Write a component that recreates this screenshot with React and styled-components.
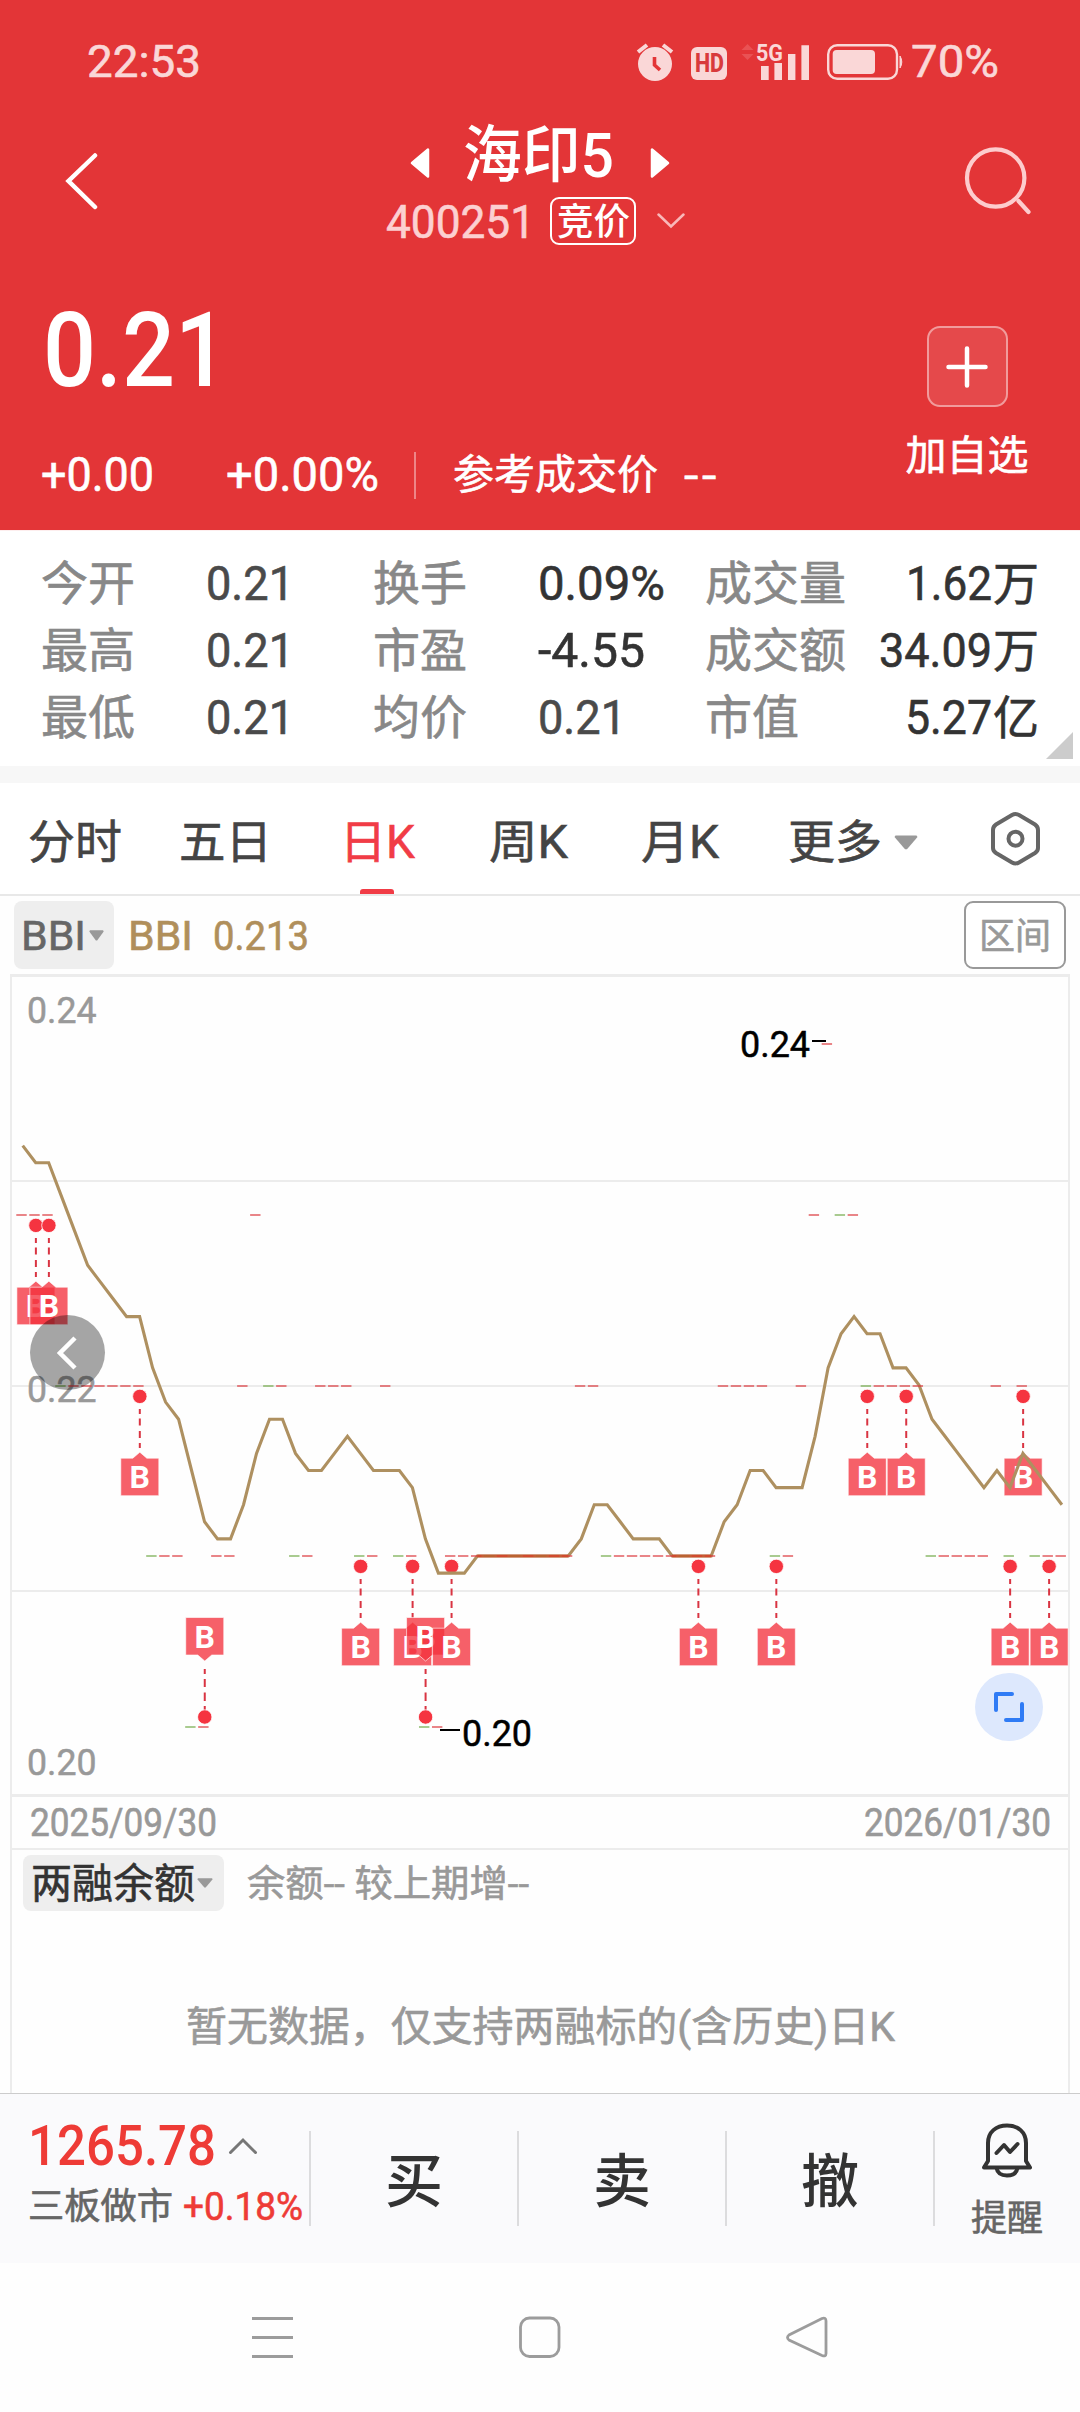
import React, { useLayoutEffect, useRef, useState } from "react";
import styled, { createGlobalStyle } from "styled-components";

const GlobalStyle = createGlobalStyle`
  * { box-sizing: border-box; }
  body {
    margin: 0;
    background: #fefefe;
    font-family: Roboto, "Noto Sans CJK SC", sans-serif;
    -webkit-font-smoothing: antialiased;
  }
  svg { display: block; flex: none; }
`;

/* Text that is condensed or expanded horizontally to fill a given width. */
const FitBox = styled.span`
  display: block;
  flex: none;
  width: ${(p) => p.$w}px;
  margin-left: ${(p) => p.$ml || 0}px;
  padding-top: ${(p) => (p.$dy || 0) * 2}px;
  font-size: ${(p) => p.$size}px;
  line-height: 1.2;
  font-weight: ${(p) => p.$weight || 400};
  -webkit-text-stroke: ${(p) => (p.$weight ? 0 : 0.6)}px currentColor;
  letter-spacing: ${(p) => p.$ls || 0}px;
  color: ${(p) => p.$color || "inherit"};
  white-space: pre;
`;
const FitInner = styled.span`
  display: inline-block;
  transform-origin: 0 50%;
`;

function Fit({ w, size, weight, color, ml, dy, ls, children }) {
  const ref = useRef(null);
  const [scale, setScale] = useState(1);
  useLayoutEffect(() => {
    const natural = ref.current.getBoundingClientRect().width / scale;
    if (natural) setScale(w / natural);
  }, [w, size, weight, children]);
  return (
    <FitBox $w={w} $size={size} $weight={weight} $color={color} $ml={ml} $dy={dy} $ls={ls}>
      <FitInner ref={ref} style={{ transform: `scaleX(${scale})` }}>
        {children}
      </FitInner>
    </FitBox>
  );
}

const Screen = styled.main`
  width: 1080px;
  height: 2412px;
  display: flex;
  flex-direction: column;
  overflow: hidden;
`;

/* ---------- red header ---------- */
const Header = styled.header`
  height: 530px;
  flex: none;
  background: #e33537;
  color: #fff;
`;
const StatusBar = styled.div`
  height: 120px;
  padding: 4px 81px 0 87px;
  display: flex;
  align-items: center;
  color: #fad7d7;
`;
const StatusIcons = styled.div`
  margin-left: auto;
  display: flex;
  align-items: center;
`;
const HdBadge = styled.div`
  width: 36px;
  height: 33px;
  margin: 3px 14px 0 17px;
  border-radius: 6px;
  background: #fad7d7;
  display: flex;
  align-items: center;
  justify-content: center;
`;
const TitleBar = styled.div`
  height: 140px;
  padding: 0 48px 0 64px;
  display: flex;
  justify-content: space-between;
`;
const BackIcon = styled.svg`
  margin-top: 31px;
`;
const SearchIcon = styled.svg`
  margin-top: 25px;
`;
const TitleBlock = styled.div`
  width: 320px;
  margin-left: 20px;
  display: flex;
  flex-direction: column;
`;
const TitleRow = styled.div`
  height: 70px;
  padding: 0 30px;
  display: flex;
  align-items: center;
  justify-content: space-between;
`;
const StepIcon = styled.svg`
  margin-top: 15px;
`;
const CodeRow = styled.div`
  height: 47px;
  margin-top: 7px;
  padding-left: 6px;
  display: flex;
  align-items: center;
  color: #fcd0d1;
`;
const MarketTag = styled.div`
  width: 86px;
  height: 48px;
  margin: 0 21px 0 15px;
  border: 2px solid #fff;
  border-radius: 9px;
  color: #fff;
  display: flex;
  align-items: center;
  justify-content: center;
`;
const QuoteArea = styled.div`
  height: 270px;
  padding: 0 27px 0 41px;
  display: flex;
  justify-content: space-between;
`;
const QuoteMain = styled.div`
  display: flex;
  flex-direction: column;
`;
const PriceRow = styled.div`
  height: 180px;
  display: flex;
  align-items: center;
`;
const ChangeRow = styled.div`
  height: 70px;
  display: flex;
  align-items: center;
`;
const ChangeDivider = styled.i`
  width: 2px;
  height: 47px;
  margin: 0 37px 0 35px;
  background: rgba(255, 255, 255, 0.4);
`;
const AddColumn = styled.div`
  width: 172px;
  padding-top: 66px;
  display: flex;
  flex-direction: column;
  align-items: center;
`;
const AddButton = styled.div`
  width: 81px;
  height: 81px;
  margin-bottom: 25px;
  border: 2px solid rgba(255, 255, 255, 0.45);
  border-radius: 13px;
  background: rgba(255, 255, 255, 0.1);
  display: flex;
  align-items: center;
  justify-content: center;
`;

/* ---------- statistics ---------- */
const Stats = styled.section`
  height: 236px;
  flex: none;
  padding: 19px 7px 7px 41px;
  border-top: 1px solid #fdeeee;
  background: #fff;
  display: flex;
`;
const StatGrid = styled.div`
  width: 998px;
  display: grid;
  grid-template-columns: 332px 332px 334px;
  grid-template-rows: repeat(3, 67px);
`;
const StatCell = styled.div`
  display: flex;
  align-items: center;
  justify-content: ${(p) => (p.$end ? "space-between" : "flex-start")};
`;
const StatLabel = styled.div`
  width: ${(p) => (p.$end ? "auto" : "165px")};
`;
const StatValue = styled.div`
  display: flex;
  align-items: center;
  gap: 1px;
`;
const CornerIcon = styled.svg`
  margin: auto 0 0 auto;
`;
const Band = styled.div`
  height: 17px;
  flex: none;
  background: #f7f7f7;
`;

/* ---------- tabs ---------- */
const Tabs = styled.nav`
  height: 113px;
  flex: none;
  padding-left: 28px;
  border-bottom: 2px solid #e8e8e8;
  background: #fff;
  display: flex;
`;
const Tab = styled.div`
  width: ${(p) => p.$w}px;
  display: flex;
  align-items: center;
  gap: 12px;
  padding-top: 8px;
  color: #444;
`;
const ActiveTab = styled.div`
  width: 149px;
  height: 111px;
  display: flex;
  flex-direction: column;
  justify-content: space-between;
  color: #f13c46;
`;
const ActiveLabel = styled.div`
  height: 106px;
  padding-top: 13px;
  display: flex;
  align-items: center;
`;
const Underline = styled.i`
  width: 34px;
  height: 5px;
  margin-left: 20px;
  border-radius: 3px 3px 0 0;
  background: #f13c46;
`;
const SettingsIcon = styled.svg`
  margin-top: 27px;
`;

/* ---------- indicator row ---------- */
const IndicatorRow = styled.div`
  height: 78px;
  flex: none;
  padding: 5px 14px 0;
  display: flex;
`;
const Pill = styled.div`
  width: ${(p) => p.$w}px;
  height: ${(p) => p.$h}px;
  padding-left: ${(p) => p.$pl}px;
  border-radius: 8px;
  background: #eee;
  display: flex;
  align-items: center;
  gap: ${(p) => p.$gap}px;
`;
const IndicatorValues = styled.div`
  height: 68px;
  margin-left: 14px;
  display: flex;
  align-items: center;
  gap: 20px;
  color: #b08f5b;
`;
const RangeButton = styled.div`
  width: 102px;
  height: 68px;
  margin-left: auto;
  border: 2px solid #999;
  border-radius: 9px;
  background: #fff;
  display: flex;
  align-items: center;
  justify-content: center;
`;

/* ---------- chart ---------- */
const ChartWrap = styled.section`
  position: relative;
  height: 823px;
  margin: 0 10px;
  flex: none;
`;
const PrevButton = styled.div`
  position: absolute;
  left: 20px;
  top: 341px;
  width: 75px;
  height: 75px;
  padding-right: 2px;
  border-radius: 50%;
  background: rgba(0, 0, 0, 0.35);
  display: flex;
  align-items: center;
  justify-content: center;
`;
const ExpandButton = styled.div`
  position: absolute;
  left: 965px;
  top: 699px;
  width: 68px;
  height: 68px;
  border-radius: 50%;
  background: #dde8fd;
  display: flex;
  align-items: center;
  justify-content: center;
`;
const DateRow = styled.div`
  height: 53px;
  flex: none;
  margin: 0 10px;
  padding: 0 17px 0 18px;
  border: 2px solid #ececec;
  border-top: 0;
  display: flex;
  align-items: center;
  justify-content: space-between;
  color: #999;
`;
const MarginPanel = styled.section`
  height: 243px;
  flex: none;
  margin: 0 10px;
  padding: 5px 11px;
  border: solid #ececec;
  border-width: 0 2px;
`;
const MarginHead = styled.div`
  display: flex;
  align-items: center;
`;
const EmptyNote = styled.div`
  display: flex;
  justify-content: center;
  margin-top: 92px;
`;

/* ---------- trade bar ---------- */
const TradeBar = styled.footer`
  height: 170px;
  flex: none;
  padding-top: 37px;
  border-top: 1px solid #ccc;
  background: #fafafc;
  display: flex;
`;
const IndexCell = styled.div`
  width: 309px;
  margin-top: -14px;
  padding-left: 28px;
`;
const IndexTop = styled.div`
  height: 58px;
  display: flex;
  align-items: center;
  gap: 12px;
`;
const IndexBottom = styled.div`
  height: 62px;
  display: flex;
  align-items: center;
  gap: 10px;
`;
const TradeCell = styled.div`
  width: 208px;
  height: 95px;
  border-left: 2px solid #dcdcde;
  display: flex;
  align-items: center;
  justify-content: center;
`;
const AlertCell = styled.div`
  width: 146px;
  height: 95px;
  border-left: 2px solid #dcdcde;
  display: flex;
  flex-direction: column;
  align-items: center;
`;
const BellIcon = styled.svg`
  margin-top: -9px;
  margin-bottom: 20px;
`;
const SystemNav = styled.div`
  height: 148px;
  flex: none;
  padding: 53px 252px 0 251px;
  background: #fefefe;
  display: flex;
  justify-content: space-between;
`;

const Down = ({ w, h }) => (
  <svg width={w} height={h} viewBox="0 0 24 15" preserveAspectRatio="none">
    <path d="M1.5 0.5H22.5L23.5 2L13 14.3H11L0.5 2Z" fill="#999" />
  </svg>
);

/* ---------- chart data ---------- */
const X0 = 22.7;
const DX = 12.99;
const px = (i) => X0 + DX * i;
const bbiY = (k) => 1556 - 17.1 * k;
/* thousandths above 0.210 for each trading day */
const BBI = [
  24, 23, 23, 21, 19, 17, 16, 15, 14, 14, 11, 9, 8, 5, 2, 1, 1, 3, 6, 8, 8, 6,
  5, 5, 6, 7, 6, 5, 5, 5, 4, 1, -1, -1, -1, 0, 0, 0, 0, 0, 0, 0, 0, 1, 3, 3, 2,
  1, 1, 1, 0, 0, 0, 0, 2, 3, 5, 5, 4, 4, 4, 7, 11, 13, 14, 13, 13, 11, 11, 10,
  8, 7, 6, 5, 4, 5, 4, 6, 5, 4, 3,
];
const DASHES = [
  { y: 1044, red: [62], green: [] },
  { y: 1215, red: [0, 1, 2, 18, 61, 64], green: [63] },
  {
    y: 1386,
    red: [4, 5, 6, 7, 8, 9, 17, 20, 23, 24, 25, 28, 43, 44, 54, 55, 56, 57, 60, 66, 67, 68, 69, 75, 77],
    green: [3, 19, 65],
  },
  {
    y: 1556,
    red: [11, 12, 15, 16, 22, 27, 30, 33, 34, 35, 37, 39, 41, 42, 46, 47, 48, 49, 50, 52, 53, 59, 71, 72, 73, 74, 79, 80],
    green: [10, 21, 26, 29, 36, 38, 40, 45, 51, 58, 70, 76, 78],
  },
  { y: 1727, red: [14, 32], green: [13, 31] },
];
const BUYS = [
  { i: 1, y: 1215 }, { i: 2, y: 1215 }, { i: 9, y: 1386 },
  { i: 14, y: 1727, below: true }, { i: 26, y: 1556 }, { i: 30, y: 1556 },
  { i: 31, y: 1727, below: true }, { i: 33, y: 1556 }, { i: 52, y: 1556 },
  { i: 58, y: 1556 }, { i: 65, y: 1386 }, { i: 68, y: 1386 },
  { i: 76, y: 1556 }, { i: 77, y: 1386 }, { i: 79, y: 1556 },
];

function Buy({ i, y, below }) {
  const x = px(i) + 0.2;
  const top = below ? y - 109.5 : y + 72.2;
  const tip = below
    ? `L${x + 7} ${top + 37.5}L${x} ${top + 43.5}L${x - 7} ${top + 37.5}`
    : "";
  const roof = below ? "" : `L${x - 7} ${top}L${x} ${top - 6}L${x + 7} ${top}`;
  const segs = below
    ? [[-58, -53], [-48, -40], [-34.5, -26], [-21, -16]]
    : [[23, 28], [32.5, 39.5], [45, 52], [57, 62]];
  return (
    <g>
      {segs.map(([a, b]) => (
        <path key={a} d={`M${x} ${y + a}V${y + b}`} stroke="#d93442" strokeWidth="2" />
      ))}
      <circle cx={x} cy={below ? y - 10 : y + 10.4} r="7.2" fill="#f53440" stroke="#fff" strokeWidth="0.8" />
      <path
        d={`M${x - 19} ${top}${roof}L${x + 19} ${top}V${top + 37.5}${tip}H${x - 19}Z`}
        fill="#f3303c"
        fillOpacity="0.77"
        stroke="#fff"
        strokeOpacity="0.6"
        strokeWidth="1"
        strokeLinejoin="round"
      />
      <text x={x} y={top + 30} textAnchor="middle" fontSize="32" fontWeight="700" fill="#fff">
        B
      </text>
    </g>
  );
}

const Dash = ({ i, y, green }) => (
  <rect x={px(i) - 6.4} y={y - 1} width="10.4" height="2" fill={green ? "#74ab4c" : "#dc3a3f"} fillOpacity="0.62" />
);

const AxisText = ({ x, y, w, fill = "#999", children }) => (
  <text x={x} y={y} fontSize="37" fill={fill} stroke={fill} strokeWidth="0.5" textLength={w} lengthAdjust="spacingAndGlyphs">
    {children}
  </text>
);

function Chart() {
  return (
    <ChartWrap>
      <svg width="1060" height="823" viewBox="10 974 1060 823">
        <path d="M11 974V1797M1069 974V1797" stroke="#ececec" strokeWidth="2" />
        <path d="M10 975.5H1070M10 1795.5H1070" stroke="#ececec" strokeWidth="3" />
        <path d="M12 1181H1068M12 1386H1068M12 1591H1068" stroke="#ececec" strokeWidth="2" />
        <AxisText x={27} y={1023} w={69.5}>0.24</AxisText>
        <AxisText x={27} y={1402} w={69.5}>0.22</AxisText>
        <AxisText x={27} y={1775} w={69.5}>0.20</AxisText>
        {BUYS.map((b) => (
          <Buy key={b.i} {...b} />
        ))}
        <polyline
          points={BBI.map((k, i) => `${px(i)},${bbiY(k)}`).join(" ")}
          fill="none"
          stroke="#ae9060"
          strokeWidth="3.1"
        />
        {DASHES.map((d) => (
          <g key={d.y}>
            {d.red.map((i) => <Dash key={i} i={i} y={d.y} />)}
            {d.green.map((i) => <Dash key={i} i={i} y={d.y} green />)}
          </g>
        ))}
        <path d={`M${px(35)} 1556H${px(42)}M${px(50)} 1556H${px(53)}`} stroke="#d2421f" strokeOpacity="0.65" strokeWidth="3" />
        <path d="M812 1041H826M440 1730H460" stroke="#000" strokeWidth="2" />
        <AxisText x={740} y={1057} w={70} fill="#000">0.24</AxisText>
        <AxisText x={462} y={1746} w={70} fill="#000">0.20</AxisText>
      </svg>
      <PrevButton>
        <svg width="20" height="34" viewBox="0 0 20 34">
          <path d="M18 2L3 17L18 32" fill="none" stroke="#fff" strokeWidth="4.5" />
        </svg>
      </PrevButton>
      <ExpandButton>
        <svg width="32" height="32" viewBox="0 0 32 32">
          <path d="M3 19V3H19M29 13V29H13" fill="none" stroke="#2f7bf5" strokeWidth="4" strokeLinecap="round" strokeLinejoin="round" />
        </svg>
      </ExpandButton>
    </ChartWrap>
  );
}

const STATS = [
  { label: "今开", lw: 94, v: "0.21", w: 88, c: "#4a4a4a" },
  { label: "换手", lw: 94, v: "0.09%", w: 127, c: "#333" },
  { label: "成交量", lw: 141, v: "1.62", w: 86, unit: "万" },
  { label: "最高", lw: 94, v: "0.21", w: 88, c: "#4a4a4a" },
  { label: "市盈", lw: 94, v: "-4.55", w: 107, c: "#333" },
  { label: "成交额", lw: 141, v: "34.09", w: 113, unit: "万" },
  { label: "最低", lw: 94, v: "0.21", w: 88, c: "#4a4a4a" },
  { label: "均价", lw: 94, v: "0.21", w: 88, c: "#4a4a4a" },
  { label: "市值", lw: 94, v: "5.27", w: 87, unit: "亿" },
];

export default function App() {
  return (
    <>
      <GlobalStyle />
      <Screen>
        <Header>
          <StatusBar>
            <Fit w={114} size={44} dy={0.5}>22:53</Fit>
            <StatusIcons>
              <svg width="38" height="40" viewBox="0 0 38 40">
                <circle cx="19" cy="22" r="17" fill="#fad7d7" />
                <path d="M2 10L11 3M36 10L27 3" stroke="#fad7d7" strokeWidth="4" />
                <path d="M18.5 15V23L24 28" fill="none" stroke="#e33537" strokeWidth="3.6" />
              </svg>
              <HdBadge>
                <Fit w={29} size={25} weight={800} color="#d83a3c">HD</Fit>
              </HdBadge>
              <svg width="70" height="56" viewBox="741 33 70 56">
                <path d="M741.5 49L747.5 43L753.5 49ZM741.5 53H753.5L747.5 59Z" fill="#e95254" />
                <text x="756" y="59.5" fontSize="24" fontWeight="700" fill="#fad7d7" textLength="27" lengthAdjust="spacingAndGlyphs">5G</text>
                <path d="M761 65H768.7V79H761ZM774.4 62H782V79H774.4ZM788 53H795.4V79H788ZM801.4 44.3H809V79H801.4Z" fill="#fad7d7" />
              </svg>
              <svg width="100" height="40" viewBox="811 42 100 40">
                <rect x="828.2" y="45.2" width="68.8" height="33.6" rx="9" fill="none" stroke="#fad7d7" strokeWidth="2.4" />
                <rect x="832.7" y="50" width="42.3" height="24" rx="4" fill="#fad7d7" />
                <path d="M900 56Q903.6 62 900 68Z" fill="#fad7d7" stroke="#fad7d7" />
              </svg>
              <Fit w={88} size={44} dy={0.5}>70%</Fit>
            </StatusIcons>
          </StatusBar>
          <TitleBar>
            <BackIcon width="34" height="60" viewBox="0 0 34 60">
              <path d="M31 4.500L4.500 30L31 56" fill="none" stroke="#fff" strokeWidth="4.500" strokeLinecap="round" />
            </BackIcon>
            <TitleBlock>
              <TitleRow>
                <StepIcon width="20" height="30" viewBox="0 0 20 30">
                  <path d="M18 1.500V28.500L2 15Z" fill="#fff" stroke="#fff" strokeWidth="2.500" strokeLinejoin="round" />
                </StepIcon>
                <Fit w={151} size={62} weight={500} dy={1.5} ml={-3}>海印5</Fit>
                <StepIcon width="20" height="30" viewBox="0 0 20 30">
                  <path d="M2 1.500V28.500L18 15Z" fill="#fff" stroke="#fff" strokeWidth="2.500" strokeLinejoin="round" />
                </StepIcon>
              </TitleRow>
              <CodeRow>
                <Fit w={149} size={46} dy={2}>400251</Fit>
                <MarketTag>
                  <Fit w={73} size={37} weight={500} dy={3}>竞价</Fit>
                </MarketTag>
                <svg width="28" height="16" viewBox="0 0 28 16">
                  <path d="M1.500 1.500L14 13.500L26.500 1.500" fill="none" stroke="#f9b8b9" strokeWidth="2.500" strokeLinecap="round" />
                </svg>
              </CodeRow>
            </TitleBlock>
            <SearchIcon width="70" height="70" viewBox="962 145 70 70">
              <circle cx="995.700" cy="178" r="28.700" fill="none" stroke="#fdcccd" strokeWidth="4.200" />
              <path d="M1018.500 201L1028.500 212" stroke="#fdcccd" strokeWidth="4.200" strokeLinecap="round" />
            </SearchIcon>
          </TitleBar>
          <QuoteArea>
            <QuoteMain>
              <PriceRow>
                <Fit w={185} size={104} weight={500} ml={1.5} dy={1}>0.21</Fit>
              </PriceRow>
              <ChangeRow>
                <Fit w={113} size={48}>+0.00</Fit>
                <Fit w={153} size={48} ml={72}>+0.00%</Fit>
                <ChangeDivider />
                <Fit w={205} size={41} dy={1}>参考成交价</Fit>
                <Fit w={36} size={42} ml={26} ls={3} dy={1}>--</Fit>
              </ChangeRow>
            </QuoteMain>
            <AddColumn>
              <AddButton>
                <svg width="42" height="42" viewBox="0 0 42 42">
                  <path d="M21 2.500V39.500M2.500 21H39.500" stroke="#fff" strokeWidth="4.500" strokeLinecap="round" />
                </svg>
              </AddButton>
              <Fit w={123} size={41}>加自选</Fit>
            </AddColumn>
          </QuoteArea>
        </Header>

        <Stats>
          <StatGrid>
            {STATS.map((s) => (
              <StatCell key={s.label} $end={!!s.unit}>
                <StatLabel $end={!!s.unit}>
                  <Fit w={s.lw} size={47} color="#888" dy={0.5}>{s.label}</Fit>
                </StatLabel>
                <StatValue>
                  <Fit w={s.w} size={48} color={s.c || "#333"}>{s.v}</Fit>
                  {s.unit && <Fit w={46} size={46} color="#333" dy={1}>{s.unit}</Fit>}
                </StatValue>
              </StatCell>
            ))}
          </StatGrid>
          <CornerIcon width="27" height="27" viewBox="0 0 27 27">
            <path d="M27 0V27H0Z" fill="#ccc" />
          </CornerIcon>
        </Stats>
        <Band />

        <Tabs>
          <Tab $w={151}><Fit w={94} size={46} dy={0.5}>分时</Fit></Tab>
          <Tab $w={161}><Fit w={93} size={46} dy={0.5}>五日</Fit></Tab>
          <ActiveTab>
            <ActiveLabel><Fit w={75} size={46} dy={0.5}>日K</Fit></ActiveLabel>
            <Underline />
          </ActiveTab>
          <Tab $w={152}><Fit w={79} size={46} dy={0.5}>周K</Fit></Tab>
          <Tab $w={147}><Fit w={78} size={46} dy={0.5}>月K</Fit></Tab>
          <Tab $w={200}>
            <Fit w={94} size={46} dy={0.5}>更多</Fit>
            <Down w={24} h={15} />
          </Tab>
          <SettingsIcon width="54" height="58" viewBox="989 810 54 58">
            <path d="M1013 815Q1016.500 813 1020 815L1036 824.500Q1039 826.500 1039 830V848Q1039 851 1036 853L1020 862.500Q1016.500 864.500 1013 862.500L997 853Q994 851 994 848V830Q994 826.500 997 824.500Z" fill="none" stroke="#666" strokeWidth="4" />
            <circle cx="1016.500" cy="838.700" r="7" fill="none" stroke="#666" strokeWidth="4" />
          </SettingsIcon>
        </Tabs>

        <IndicatorRow>
          <Pill $w={100} $h={68} $gap={3} $pl={7}>
            <Fit w={65} size={41} color="#666" dy={1.5}>BBI</Fit>
            <Down w={15} h={11} />
          </Pill>
          <IndicatorValues>
            <Fit w={65} size={41} dy={1.5}>BBI</Fit>
            <Fit w={96} size={41} dy={1.5}>0.213</Fit>
          </IndicatorValues>
          <RangeButton>
            <Fit w={72} size={36} color="#999" dy={2.5}>区间</Fit>
          </RangeButton>
        </IndicatorRow>

        <Chart />
        <DateRow>
          <Fit w={187} size={38} dy={1}>2025/09/30</Fit>
          <Fit w={187} size={38} dy={1}>2026/01/30</Fit>
        </DateRow>
        <MarginPanel>
          <MarginHead>
            <Pill $w={201} $h={56} $gap={2} $pl={8}>
              <Fit w={164} size={41} color="#333" dy={1.5}>两融余额</Fit>
              <Down w={16} h={10} />
            </Pill>
            <Fit w={282} size={37} color="#999" ml={23} dy={2.5}>余额-- 较上期增--</Fit>
          </MarginHead>
          <EmptyNote>
            <Fit w={709} size={41} color="#999">暂无数据，仅支持两融标的(含历史)日K</Fit>
          </EmptyNote>
        </MarginPanel>

        <TradeBar>
          <IndexCell>
            <IndexTop>
              <Fit w={188} size={55} weight={500} color="#ee3b36">1265.78</Fit>
              <svg width="30" height="18" viewBox="0 0 30 18">
                <path d="M2.500 15.500L15 3L27.500 15.500" fill="none" stroke="#777" strokeWidth="3" strokeLinecap="round" />
              </svg>
            </IndexTop>
            <IndexBottom>
              <Fit w={145} size={36} color="#666" dy={2}>三板做市</Fit>
              <Fit w={120} size={38} color="#ee3b36" dy={1.5}>+0.18%</Fit>
            </IndexBottom>
          </IndexCell>
          {["买", "卖", "撤"].map((t) => (
            <TradeCell key={t}>
              <Fit w={58} size={58} weight={500} color="#333" dy={4.5}>{t}</Fit>
            </TradeCell>
          ))}
          <AlertCell>
            <BellIcon width="54" height="56" viewBox="0 0 54 56">
              <path d="M8 39V21C8 10 16 3.500 27 3.500S46 10 46 21V39L50 45.500H4Z" fill="none" stroke="#333" strokeWidth="4" strokeLinejoin="round" />
              <path d="M16.500 46C17.500 51.500 22 53.500 27 53.500S36.500 51.500 37.500 46" fill="none" stroke="#333" strokeWidth="4" />
              <path d="M16.500 31L24 23L30 30L37.500 22" fill="none" stroke="#333" strokeWidth="4" strokeLinecap="round" strokeLinejoin="round" />
            </BellIcon>
            <Fit w={72} size={36} color="#666">提醒</Fit>
          </AlertCell>
        </TradeBar>

        <SystemNav>
          <svg width="43" height="43" viewBox="0 0 43 43">
            <path d="M1 2.500H42M1 21.500H42M1 40.500H42" stroke="#9c9c9c" strokeWidth="3" />
          </svg>
          <svg width="43" height="43" viewBox="0 0 43 43">
            <rect x="2.500" y="2" width="38.500" height="38.500" rx="9" fill="none" stroke="#9c9c9c" strokeWidth="2.800" />
          </svg>
          <svg width="43" height="43" viewBox="0 0 43 43">
            <path d="M37 2.500Q41 1 41 5V37.500Q41 41 37 39.500L4 24Q1 21.500 4 19Z" fill="none" stroke="#9c9c9c" strokeWidth="2.800" />
          </svg>
        </SystemNav>
      </Screen>
    </>
  );
}
